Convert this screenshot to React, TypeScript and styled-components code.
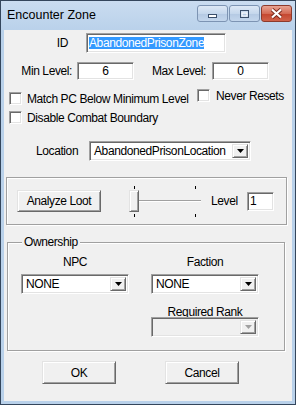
import React from 'react';
import styled, { createGlobalStyle, css } from 'styled-components';

const GlobalStyle = createGlobalStyle`
  body {
    margin: 0;
    background: #ffffff;
    font-family: 'Liberation Sans', Arial, sans-serif;
    font-size: 12px;
    letter-spacing: -0.4px;
    color: #000;
  }
`;

const sunken = css`
  border: 1px solid;
  border-color: #a0a0a0 #ffffff #ffffff #a0a0a0;
  box-shadow: inset 1px 1px 0 #696969, inset -1px -1px 0 #e3e3e3;
`;

const raised = css`
  border: 1px solid;
  border-color: #e3e3e3 #696969 #696969 #e3e3e3;
  box-shadow: inset 1px 1px 0 #ffffff, inset -1px -1px 0 #a0a0a0;
`;

const Window = styled.div`
  width: 296px;
  height: 405px;
  box-sizing: border-box;
  border: 1px solid #34465c;
  background: linear-gradient(#cadcf0, #b9d1ea 30px);
  padding: 0 3px 3px;
  display: flex;
  flex-direction: column;
`;

const TitleBar = styled.div`
  height: 29px;
  display: flex;
  align-items: flex-start;
  padding-left: 3px;
`;

const Title = styled.span`
  font-size: 12.5px;
  letter-spacing: 0;
  line-height: 14px;
  margin-top: 7px;
`;

const Caption = styled.div`
  margin-left: auto;
  margin-top: 4px;
  display: flex;
  gap: 1px;
`;

const CaptionButton = styled.div<{ $close?: boolean }>`
  width: 31px;
  height: 17px;
  box-sizing: border-box;
  border: 1px solid ${(p) => (p.$close ? '#8d3a2c' : '#7d94b3')};
  border-radius: 3px;
  background: ${(p) =>
    p.$close
      ? 'linear-gradient(#e8a493, #d46b55 50%, #c4452e 51%, #d0624a)'
      : 'linear-gradient(#dde8f5, #c5d7ec 50%, #b4c9e3 51%, #c3d6ec)'};
  display: flex;
  align-items: center;
  justify-content: center;
`;

const Client = styled.div`
  flex: 1;
  background: #f0f0f0;
  display: flex;
  flex-direction: column;
`;

const Row = styled.div<{ $top: number; $h?: number }>`
  display: flex;
  align-items: center;
  margin-top: ${(p) => p.$top}px;
  height: ${(p) => p.$h ?? 20}px;
`;

const Label = styled.span<{ $w: number; $pad?: number; $right?: boolean }>`
  width: ${(p) => p.$w}px;
  box-sizing: border-box;
  padding-left: ${(p) => p.$pad ?? 0}px;
  text-align: ${(p) => (p.$right ? 'right' : 'left')};
  white-space: nowrap;
`;

const TextField = styled.div<{ $w: number; $h?: number; $ml?: number; $center?: boolean }>`
  ${sunken};
  box-sizing: border-box;
  width: ${(p) => p.$w}px;
  height: ${(p) => p.$h ?? 20}px;
  margin-left: ${(p) => p.$ml ?? 0}px;
  background: #fff;
  display: flex;
  align-items: center;
  justify-content: ${(p) => (p.$center ? 'center' : 'flex-start')};
  padding: 0 2px;
  white-space: nowrap;
`;

const Selected = styled.span`
  background: #3399ff;
  color: #fff;
  line-height: 12px;
`;

const ChecksArea = styled.div`
  display: flex;
  margin-top: 9px;
`;

const CheckColumn = styled.div`
  width: 193px;
  box-sizing: border-box;
  padding-left: 5px;
  padding-top: 3px;
  display: flex;
  flex-direction: column;
  gap: 6px;
`;

const Check = styled.label<{ $gap?: number }>`
  display: flex;
  align-items: center;
  gap: ${(p) => p.$gap ?? 5}px;
  height: 13px;
  white-space: nowrap;
`;

const CheckBox = styled.span`
  ${sunken};
  box-sizing: border-box;
  width: 13px;
  height: 13px;
  background: #fff;
  flex: none;
`;

const Combo = styled.div<{ $w: number; $ml?: number; $disabled?: boolean }>`
  ${sunken};
  box-sizing: border-box;
  width: ${(p) => p.$w}px;
  height: 20px;
  margin-left: ${(p) => p.$ml ?? 0}px;
  background: ${(p) => (p.$disabled ? '#f0f0f0' : '#fff')};
  padding: 2px;
  display: flex;
  align-items: center;
`;

const ComboText = styled.span`
  flex: 1;
  padding-left: 2px;
  white-space: nowrap;
  overflow: hidden;
`;

const DropButton = styled.span`
  ${raised};
  box-sizing: border-box;
  width: 16px;
  align-self: stretch;
  background: #f0f0f0;
  display: flex;
  align-items: center;
  justify-content: center;
`;

const Group = styled.div`
  margin: 16px 0 0 2px;
  width: 281px;
  height: 48px;
  box-sizing: border-box;
  border: 1px solid #a0a0a0;
  box-shadow: inset 1px 1px 0 #fff, 1px 1px 0 #fff;
  display: flex;
  align-items: center;
`;

const PushButton = styled.button<{ $w: number; $h?: number; $ml?: number }>`
  ${raised};
  box-sizing: border-box;
  width: ${(p) => p.$w}px;
  height: ${(p) => p.$h ?? 22}px;
  margin-left: ${(p) => p.$ml ?? 0}px;
  background: #f0f0f0;
  font: inherit;
  letter-spacing: inherit;
  color: #000;
  padding: 0;
  border-radius: 0;
`;

const Slider = styled.div`
  position: relative;
  width: 76px;
  height: 33px;
  margin-left: 26px;
`;

const Track = styled.div`
  position: absolute;
  left: 4px;
  right: 2px;
  top: 15px;
  height: 1px;
  background: #a0a0a0;
  border-bottom: 1px solid #fff;
`;

const Thumb = styled.div`
  ${raised};
  position: absolute;
  left: 2px;
  top: 5px;
  width: 10px;
  height: 22px;
  box-sizing: border-box;
  background: #f0f0f0;
`;

const Tick = styled.span<{ $x: number; $bottom?: boolean }>`
  position: absolute;
  left: ${(p) => p.$x}px;
  ${(p) => (p.$bottom ? 'bottom: 1px;' : 'top: 1px;')}
  width: 1px;
  height: 3px;
  background: #000;
`;

const Ownership = styled.fieldset`
  margin: 11px 0 0 3px;
  width: 278px;
  box-sizing: border-box;
  border: 1px solid #a0a0a0;
  box-shadow: inset 1px 1px 0 #fff, 1px 1px 0 #fff;
  padding: 7px 0 13px 13px;
`;

const Legend = styled.legend`
  margin-left: 1px;
  padding: 0 2px;
  background: #f0f0f0;
  line-height: 13px;
`;

const OwnerGrid = styled.div`
  display: grid;
  grid-template-columns: 108px 108px;
  column-gap: 22px;
  grid-template-rows: 13px 20px 13px 20px;
  row-gap: 5px;
`;

const GridCaption = styled.span<{ $mt?: number }>`
  text-align: center;
  line-height: 13px;
  margin-top: ${(p) => p.$mt ?? 0}px;
`;

const Footer = styled.div`
  display: flex;
  gap: 49px;
  margin: 10px 0 0 38px;
`;

const Arrow = ({ color = '#000' }: { color?: string }) => (
  <svg width="7" height="4" viewBox="0 0 7 4">
    <polygon points="0,0 7,0 3.5,4" fill={color} />
  </svg>
);

const ComboBox = ({ w, ml, value, disabled }: { w: number; ml?: number; value?: string; disabled?: boolean }) => (
  <Combo $w={w} $ml={ml} $disabled={disabled}>
    <ComboText>{value}</ComboText>
    <DropButton>
      <Arrow color={disabled ? '#a0a0a0' : '#000'} />
    </DropButton>
  </Combo>
);

export default function App() {
  return (
    <>
      <GlobalStyle />
      <Window>
        <TitleBar>
          <Title>Encounter Zone</Title>
          <Caption>
            <CaptionButton>
              <svg width="11" height="10" viewBox="0 0 11 10">
                <rect x="1.5" y="5.5" width="8" height="3" fill="#fff" stroke="#3b4f6b" />
              </svg>
            </CaptionButton>
            <CaptionButton>
              <svg width="11" height="10" viewBox="0 0 11 10">
                <rect x="1.5" y="1.5" width="8" height="7" fill="none" stroke="#3b4f6b" />
                <rect x="3" y="4" width="5" height="3" fill="none" stroke="#fff" />
              </svg>
            </CaptionButton>
            <CaptionButton $close>
              <svg width="13" height="11" viewBox="0 0 13 11">
                <path d="M2 1.5 L11 9.5 M11 1.5 L2 9.5" stroke="#7a2a1d" strokeWidth="4" />
                <path d="M2 1.5 L11 9.5 M11 1.5 L2 9.5" stroke="#fff" strokeWidth="2.2" />
              </svg>
            </CaptionButton>
          </Caption>
        </TitleBar>
        <Client>
          <Row $top={3}>
            <Label $w={64} $right>ID</Label>
            <TextField $w={140} $ml={18}>
              <Selected>AbandonedPrisonZone</Selected>
            </TextField>
          </Row>
          <Row $top={9} $h={18}>
            <Label $w={68} $right>Min Level:</Label>
            <TextField $w={57} $h={18} $ml={5} $center>6</TextField>
            <Label $w={72} $right>Max Level:</Label>
            <TextField $w={57} $h={18} $ml={6} $center>0</TextField>
          </Row>
          <ChecksArea>
            <CheckColumn>
              <Check>
                <CheckBox />
                Match PC Below Minimum Level
              </Check>
              <Check>
                <CheckBox />
                Disable Combat Boundary
              </Check>
            </CheckColumn>
            <Check $gap={6}>
              <CheckBox />
              Never Resets
            </Check>
          </ChecksArea>
          <Row $top={17}>
            <Label $w={85} $pad={32}>Location</Label>
            <ComboBox w={162} value="AbandonedPrisonLocation" />
          </Row>
          <Group>
            <PushButton $w={84} $ml={10}>Analyze Loot</PushButton>
            <Slider>
              <Tick $x={7} />
              <Tick $x={68} />
              <Track />
              <Thumb />
              <Tick $x={7} $bottom />
              <Tick $x={68} $bottom />
            </Slider>
            <Label $w={36} style={{ marginLeft: 8 }}>Level</Label>
            <TextField $w={27} $h={19}>1</TextField>
          </Group>
          <Ownership>
            <Legend>Ownership</Legend>
            <OwnerGrid>
              <GridCaption>NPC</GridCaption>
              <GridCaption>Faction</GridCaption>
              <ComboBox w={108} value="NONE" />
              <ComboBox w={108} value="NONE" />
              <span />
              <GridCaption $mt={7}>Required Rank</GridCaption>
              <span />
              <ComboBox w={108} disabled />
            </OwnerGrid>
          </Ownership>
          <Footer>
            <PushButton $w={74} $h={23}>OK</PushButton>
            <PushButton $w={74} $h={23}>Cancel</PushButton>
          </Footer>
        </Client>
      </Window>
    </>
  );
}
